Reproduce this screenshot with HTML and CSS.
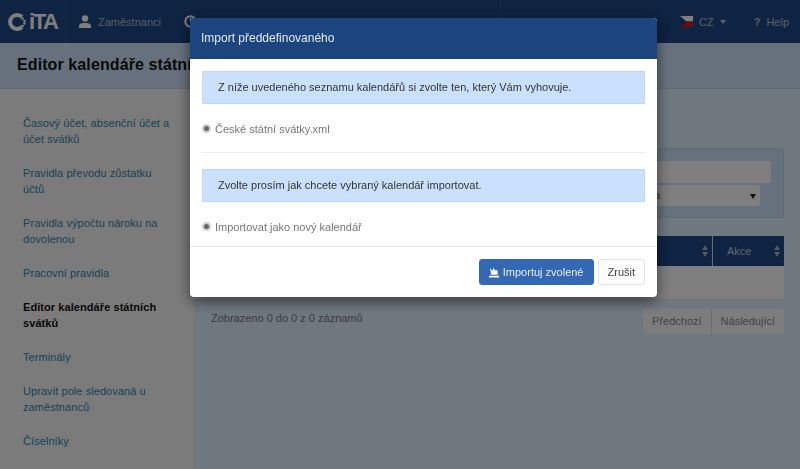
FILE: index.html
```html
<!DOCTYPE html>
<html lang="cs">
<head>
    <meta charset="UTF-8">
    <title>Editor kalendáře státních svátků</title>
    <link rel="stylesheet" href="styles.css">
</head>
<body>
<div class="navbar">
    <div class="navbar-brand">
        <svg class="logo" width="20" height="20" viewBox="0 0 20 20">
            <path d="M15 5A7 7 0 1 0 15 15" fill="none" stroke="#fff" stroke-width="4"/>
            <circle cx="15.500" cy="6.500" r="1.300" fill="#fff"/>
            <circle cx="17.500" cy="9" r="1.300" fill="#fff"/>
            <circle cx="17.500" cy="11.500" r="1.300" fill="#fff"/>
            <circle cx="15.500" cy="14" r="1.300" fill="#fff"/>
        </svg>
        <span class="logo-text">iTA</span>
    </div>
    <div class="nav-links">
        <a class="nav-item nav-first" href="#">
            <svg width="12" height="13" viewBox="0 0 12 13"><circle cx="6" cy="3.500" r="3.200" fill="#fff"/><path d="M0 13V11C0 8.500 3 8 6 8S12 8.500 12 11V13Z" fill="#fff"/></svg>
            Zaměstnanci
        </a>
        <svg class="nav-clock" width="13" height="13" viewBox="0 0 13 13"><circle cx="6.500" cy="6.500" r="5.200" fill="none" stroke="#fff" stroke-width="2"/><path d="M6.500 3.500V7H9" fill="none" stroke="#fff"/></svg>
    </div>
    <div class="nav-spacer"></div>
    <a class="nav-item nav-lang" href="#">
        <svg width="13" height="11" viewBox="0 0 13 11"><rect width="13" height="5.500" fill="#fff"/><rect y="5.500" width="13" height="5.500" fill="#d7141a"/><path d="M0 0L6.500 5.500L0 11Z" fill="#11457e"/></svg>
        CZ <span class="caret"></span>
    </a>
    <a class="nav-item nav-help" href="#"><b>?</b> Help</a>
</div>

<div class="page-header">
    <h1>Editor kalendáře státních svátků</h1>
</div>

<div class="page-body">
    <div class="sidebar">
        <a href="#">Časový účet, absenční účet a účet svátků</a>
        <a href="#">Pravidla převodu zůstatku účtů</a>
        <a href="#">Pravidla výpočtu nároku na dovolenou</a>
        <a href="#">Pracovní pravidla</a>
        <a href="#" class="active">Editor kalendáře státních svátků</a>
        <a href="#">Terminály</a>
        <a href="#">Upravit pole sledovaná u zaměstnanců</a>
        <a href="#">Číselníky</a>
    </div>
    <div class="content">
        <div class="filter-panel">
            <div class="fake-input"></div>
            <div class="fake-select">Česká republika<span class="select-arrow"></span></div>
        </div>
        <table class="records-table">
            <thead>
                <tr>
                    <th>Název <span class="sort"></span></th>
                    <th class="col-action">Akce <span class="sort"></span></th>
                </tr>
            </thead>
            <tbody>
                <tr><td colspan="2"></td></tr>
            </tbody>
        </table>
        <div class="table-footer">
            <span class="table-info">Zobrazeno 0 do 0 z 0 záznamů</span>
            <div class="pager">
                <a href="#">Předchozí</a>
                <a href="#">Následující</a>
            </div>
        </div>
    </div>
</div>

<div class="backdrop"></div>

<!-- Import dialog -->
<div class="modal">
    <div class="modal-header">Import předdefinovaného</div>
    <div class="modal-body">
        <div class="info-box">Z níže uvedeného seznamu kalendářů si zvolte ten, který Vám vyhovuje.</div>
        <label class="radio-row"><span class="radio"></span>České státní svátky.xml</label>
        <hr>
        <div class="info-box">Zvolte prosím jak chcete vybraný kalendář importovat.</div>
        <label class="radio-row radio-last"><span class="radio"></span>Importovat jako nový kalendář</label>
    </div>
    <div class="modal-footer">
        <button class="btn btn-primary">
            <svg width="10" height="12" viewBox="0 0 11 12"><path d="M0 10H11V12H0ZM2 9V6L1 2L4 4.500L5 1L6.500 4H9.500V9Z" fill="#fff"/></svg>
            Importuj zvolené
        </button>
        <button class="btn">Zrušit</button>
    </div>
</div>
</body>
</html>
```

FILE: styles.css
```css
html, body {
    margin: 0;
    padding: 0;
    height: 469px;
    overflow: hidden;
}

body {
    font-family: "Liberation Sans", Arial, sans-serif;
    font-size: 11px;
    color: #333;
    background-color: #deeefe;
    display: flex;
    flex-direction: column;
}

a {
    text-decoration: none;
}

.navbar {
    display: flex;
    align-items: center;
    height: 43px;
    flex-shrink: 0;
    background-color: #1e4684;
}

.navbar-brand {
    width: 66px;
    height: 100%;
    display: flex;
    align-items: center;
    gap: 2px;
    padding-left: 7px;
    box-sizing: border-box;
    border-right: 1px solid #2a5596;
}

.logo-text {
    color: #fff;
    font-size: 22px;
    font-weight: bold;
    letter-spacing: -2px;
}

.nav-links {
    width: 435px;
    height: 100%;
    box-sizing: border-box;
    display: flex;
    align-items: center;
    border-right: 1px solid #2a5596;
}

.nav-item {
    display: flex;
    align-items: center;
    color: #b4bfd0;
    font-size: 11px;
}

.nav-first {
    margin-left: 13px;
    gap: 7px;
}

.nav-clock {
    margin-left: 23px;
}

.nav-spacer {
    flex: 1;
}

.nav-lang {
    gap: 6px;
    margin-right: 28px;
}

.nav-help {
    gap: 6px;
    margin-right: 11px;
}

.caret {
    width: 0;
    height: 0;
    border-left: 3px solid transparent;
    border-right: 3px solid transparent;
    border-top: 4px solid #b4bfd0;
}

.page-header {
    height: 46px;
    flex-shrink: 0;
    box-sizing: border-box;
    background-color: #cde3fb;
    border-bottom: 1px solid #bcd6f2;
    padding-left: 17px;
    display: flex;
    align-items: center;
}

h1 {
    margin: 0 0 2px 0;
    font-size: 16px;
    letter-spacing: 0.1px;
    color: #111;
}

.page-body {
    flex: 1;
    display: flex;
}

.sidebar {
    width: 194px;
    flex-shrink: 0;
    box-sizing: border-box;
    background-color: #f6f6f6;
    padding: 26px 20px 0 23px;
}

.sidebar a {
    display: block;
    color: #2f85b0;
    font-size: 11px;
    letter-spacing: 0.07px;
    line-height: 16px;
    margin-bottom: 18px;
}

.sidebar a.active {
    color: #111;
    font-weight: bold;
}

.content {
    flex: 1;
    padding: 59px 16px 0 0;
}

.filter-panel {
    height: 70px;
    box-sizing: border-box;
    background-color: #cde3fb;
    border: 1px solid #bcd6f2;
    padding: 12px 12px 0 0;
    display: flex;
    flex-direction: column;
    align-items: flex-end;
    gap: 2px;
}

.fake-input, .fake-select {
    height: 22px;
    background-color: #fff;
    border-radius: 2px;
    box-sizing: border-box;
}

.fake-input {
    width: 100%;
}

.fake-select {
    width: calc(100% - 11px);
    height: 21px;
    line-height: 21px;
    font-size: 11px;
    color: #555;
    margin-right: 11px;
    padding-right: 100px;
    text-align: right;
    position: relative;
}

.select-arrow {
    position: absolute;
    right: 4px;
    top: 9px;
    border-left: 3px solid transparent;
    border-right: 3px solid transparent;
    border-top: 5px solid #222;
}

.records-table {
    width: 100%;
    border-collapse: collapse;
    margin-top: 18px;
}

.records-table th {
    height: 30px;
    padding: 0 5px 0 14px;
    background-color: #1e4684;
    color: #c9d2e0;
    font-size: 11px;
    font-weight: normal;
    text-align: left;
    position: relative;
    border-left: 1px solid #cde3fb;
}

.records-table th.col-action {
    width: 52px;
}

.sort {
    position: absolute;
    right: 4px;
    top: 9px;
    border-left: 3px solid transparent;
    border-right: 3px solid transparent;
    border-bottom: 5px solid #a8b4c6;
}

.sort::after {
    content: "";
    position: absolute;
    left: -3px;
    top: 7px;
    border-left: 3px solid transparent;
    border-right: 3px solid transparent;
    border-top: 5px solid #a8b4c6;
}

.records-table td {
    height: 31px;
    background-color: #fcfcfc;
    border-bottom: 1px solid #e6e6e6;
}

.table-footer {
    display: flex;
    justify-content: space-between;
    margin-top: 9px;
    padding-left: 17px;
}

.table-info {
    font-size: 11px;
    color: #777;
    padding-top: 3px;
}

.pager {
    display: flex;
    background-color: #fafafa;
    border-radius: 2px;
}

.pager a {
    color: #888;
    font-size: 11px;
    line-height: 25px;
    padding: 0 9px;
    border-left: 1px solid #ddd;
}

.pager a:first-child {
    border-left: none;
}

.backdrop {
    position: fixed;
    top: 0;
    left: 0;
    width: 100%;
    height: 100%;
    background-color: rgba(0, 0, 0, 0.5);
}

.modal {
    position: fixed;
    top: 18px;
    left: 190px;
    width: 467px;
    background-color: #fff;
    border-radius: 4px;
    box-shadow: 0 4px 14px rgba(0, 0, 0, 0.55);
    overflow: hidden;
}

.modal-header {
    height: 41px;
    box-sizing: border-box;
    padding-left: 11px;
    line-height: 40px;
    background-color: #1c447f;
    color: #e3e8f0;
    font-size: 12px;
}

.modal-body {
    padding: 12px 12px 0 12px;
}

.info-box {
    height: 33px;
    line-height: 31px;
    box-sizing: border-box;
    padding-left: 15px;
    background-color: #cbe0fe;
    border: 1px solid #bdd6fb;
    color: #333;
    font-size: 11px;
}

.radio-row {
    display: flex;
    align-items: center;
    gap: 4px;
    height: 16px;
    margin: 17px 0 15px 0;
    color: #777;
    font-size: 11px;
}

.radio-last {
    margin-bottom: 11px;
}

.radio {
    width: 9px;
    height: 9px;
    box-sizing: border-box;
    border-radius: 50%;
    background-color: #666;
    border: 2px solid #cfcfcf;
    margin-top: -2px;
}

hr {
    border: none;
    border-top: 1px solid #f0f0f0;
    margin: 0 0 16px 0;
}

.modal-footer {
    display: flex;
    justify-content: flex-end;
    gap: 4px;
    padding: 12px 12px 12px 0;
    border-top: 1px solid #e5e5e5;
}

.btn {
    height: 26px;
    padding: 0 9px;
    font-family: inherit;
    font-size: 11px;
    color: #444;
    background-color: #fff;
    border: 1px solid #e3e3e3;
    border-radius: 3px;
    display: flex;
    align-items: center;
    gap: 4px;
}

.btn-primary {
    background-color: #3568b4;
    border-color: #3568b4;
    color: #e6edf7;
}
```
